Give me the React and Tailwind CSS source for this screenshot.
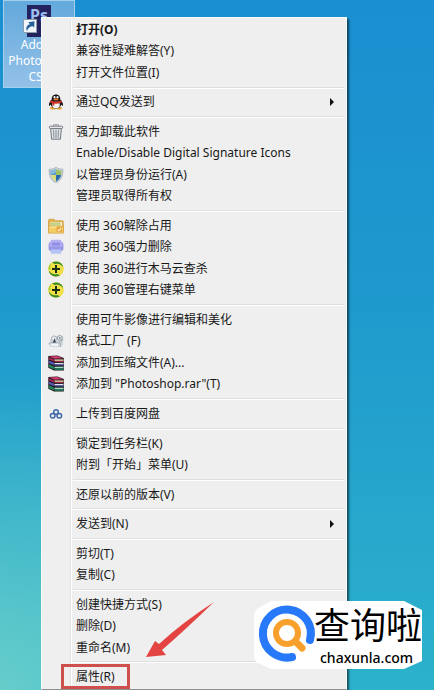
const groups = [
  [
    { label: "打开(O)", bold: true },
    { label: "兼容性疑难解答(Y)" },
    { label: "打开文件位置(I)" },
  ],
  [{ label: "通过QQ发送到", icon: PenguinIcon, submenu: true }],
  [
    { label: "强力卸载此软件", icon: TrashIcon },
    { label: "Enable/Disable Digital Signature Icons" },
    { label: "以管理员身份运行(A)", icon: ShieldIcon },
    { label: "管理员取得所有权" },
  ],
  [
    { label: "使用 360解除占用", icon: FolderIcon },
    { label: "使用 360强力删除", icon: ShredderIcon },
    { label: "使用 360进行木马云查杀", icon: PlusBallIcon },
    { label: "使用 360管理右键菜单", icon: PlusBallIcon },
  ],
  [
    { label: "使用可牛影像进行编辑和美化" },
    { label: "格式工厂 (F)", icon: FactoryIcon },
    { label: "添加到压缩文件(A)...", icon: BooksIcon },
    { label: '添加到 "Photoshop.rar"(T)', icon: BooksIcon },
  ],
  [{ label: "上传到百度网盘", icon: CloudIcon }],
  [{ label: "锁定到任务栏(K)" }, { label: "附到「开始」菜单(U)" }],
  [{ label: "还原以前的版本(V)" }],
  [{ label: "发送到(N)", submenu: true }],
  [{ label: "剪切(T)" }, { label: "复制(C)" }],
  [
    { label: "创建快捷方式(S)" },
    { label: "删除(D)" },
    { label: "重命名(M)" },
  ],
  [{ label: "属性(R)", marked: true }],
];

function PenguinIcon() {
  return (
    <svg viewBox="0 0 16 16" className="size-4">
      <ellipse cx="4.8" cy="14.3" rx="3" ry="1.4" fill="#e9a53a" />
      <ellipse cx="11.2" cy="14.3" rx="3" ry="1.4" fill="#e9a53a" />
      <path d="M8 0.5C5 0.5 3.6 2.7 3.7 5.6C2 7.4 0.5 9.8 1 11.6C1.4 12.3 2.3 11.4 2.8 10.6C3.2 13.3 5.2 14.6 8 14.6S12.8 13.3 13.2 10.6C13.7 11.4 14.6 12.3 15 11.6C15.5 9.8 14 7.4 12.3 5.6C12.4 2.7 11 0.5 8 0.5Z" fill="#191616" />
      <ellipse cx="8" cy="11" rx="3.8" ry="3.2" fill="#f7f5f2" />
      <ellipse cx="6.5" cy="3.2" rx="1" ry="1.3" fill="#fff" />
      <ellipse cx="9.5" cy="3.2" rx="1" ry="1.3" fill="#fff" />
      <ellipse cx="8" cy="5.4" rx="2.7" ry="0.9" fill="#e6802f" />
      <path d="M2.6 6.3Q8 8.8 13.4 6.3L13.8 8.4Q8 11 2.2 8.4Z" fill="#cf332b" />
      <path d="M4.6 8.4L6.5 9L6.2 11.6H4.5Z" fill="#cf332b" />
    </svg>
  );
}

function TrashIcon() {
  return (
    <svg viewBox="0 0 16 16" className="size-4" fill="none" stroke="#8c9299">
      <path d="M2.6 4.2L3.6 15.2H12.4L13.4 4.2Z" fill="#dfe3e7" stroke="#71777e" />
      <path d="M5.4 5.5L5.9 14M8 5.5V14M10.6 5.5L10.1 14" stroke="#969ca3" strokeWidth="1.2" />
      <rect x="1.3" y="2.2" width="13.4" height="2.2" rx="1" fill="#f6f7f8" stroke="#71777e" />
      <path d="M5.6 2V0.8H10.4V2" />
    </svg>
  );
}

function ShieldIcon() {
  return (
    <svg viewBox="0 0 16 16" className="size-4">
      <path d="M8 0.2C6 1.7 3.8 2.2 1.1 2.2C0.7 8.6 2.7 13.4 8 15.8C13.3 13.4 15.3 8.6 14.9 2.2C12.2 2.2 10 1.7 8 0.2Z" fill="#c9d3da" stroke="#8fa0ad" strokeWidth="0.6" />
      <path d="M8 1.9C6.4 2.9 4.7 3.4 2.5 3.5C2.4 5.2 2.5 6.6 2.8 8H8Z" fill="#5a9dcb" />
      <path d="M8 1.9C9.6 2.9 11.3 3.4 13.5 3.5C13.6 5.2 13.5 6.6 13.2 8H8Z" fill="#9fc062" />
      <path d="M2.8 8H8V14.4C5.4 13 3.5 10.9 2.8 8Z" fill="#d9dc78" />
      <path d="M13.2 8H8V14.4C10.6 13 12.5 10.9 13.2 8Z" fill="#2a6aac" />
      <path d="M3.2 4.2Q5.8 4 8 2.6V5Q6 7 2.9 7Z" fill="#a9cfe8" opacity="0.6" />
    </svg>
  );
}

function FolderIcon() {
  return (
    <svg viewBox="0 0 16 16" className="size-4">
      <path d="M0.5 14.5V2.2Q0.5 1.2 1.5 1.2H6L7.4 2.7H14.4Q15.3 2.7 15.3 3.6V14.5Z" fill="#e7b347" stroke="#c18f35" strokeWidth="0.6" />
      <path d="M2.3 4.1H14V8H2.3Z" fill="#f6f3cf" />
      <path d="M2.3 5.2H12.5M2.3 6.9H12.5" stroke="#9ab85a" strokeWidth="0.9" />
      <path d="M0.5 8H15.5V15.2H0.5Z" fill="#f3cc63" stroke="#d19a3b" strokeWidth="0.6" />
      <path d="M1.5 9.2H9" stroke="#fff0a8" />
      <rect x="8.5" y="8.8" width="5.6" height="5.2" rx="1" fill="#e9a23f" />
      <path d="M9.8 11.6L11 12.8L13.2 9.8" fill="none" stroke="#fff4cf" strokeWidth="1.1" />
    </svg>
  );
}

function ShredderIcon() {
  return (
    <svg viewBox="0 0 16 16" className="size-4">
      <rect x="2.8" y="0.8" width="10.4" height="5" rx="1.2" fill="#b3b1f2" />
      <rect x="0.6" y="3" width="14.8" height="9" rx="2" fill="#9a97e8" />
      <rect x="1.4" y="3.6" width="13.2" height="4" rx="1.4" fill="#b1aef3" />
      <rect x="4" y="4" width="8" height="2.6" rx="0.6" fill="#908de3" />
      <path d="M2.6 10.6H13.4L13.2 14.8H2.8Z" fill="#b7c3f6" />
    </svg>
  );
}

function PlusBallIcon() {
  return (
    <svg viewBox="0 0 16 16" className="size-4">
      <circle cx="8" cy="8" r="7.8" fill="#f0e045" />
      <path d="M4 1.4Q11-1.4 14.6 4.2L15.2 6.4Q12.4 1.8 6.6 3Z" fill="#3a8c2b" />
      <path d="M12 14.6Q5 17.4 1.4 11.8L0.8 9.6Q3.6 14.2 9.4 13Z" fill="#3a8c2b" />
      <path d="M0.3 7.2Q0.8 3.6 3.4 1.8Q2 5 2.4 8.4Q0.8 9.6 0.3 7.2Z" fill="#a7cf3a" />
      <path d="M8 4V12M4 8H12" stroke="#17300f" strokeWidth="2" />
    </svg>
  );
}

function FactoryIcon() {
  return (
    <svg viewBox="0 0 16 16" className="size-4">
      <path d="M0.5 11L3 5L9 3L15.3 3.2L15 11L13 14L2.5 13.8Z" fill="#cfd5da" />
      <path d="M0.5 11L3 9.6L12 9.8L15 6M12 9.8L12.6 14" fill="none" stroke="#99a2aa" strokeWidth="0.7" />
      <circle cx="6" cy="5.4" r="2.5" fill="#edf0f2" stroke="#8a949d" strokeWidth="0.7" />
      <path d="M6 4.6V7.6L4.3 9.4H8Z" fill="#36434e" />
      <circle cx="11.8" cy="4.9" r="2.4" fill="#e9ecef" stroke="#75808a" strokeWidth="0.7" />
      <circle cx="11.8" cy="4.9" r="0.8" fill="#5c6b78" />
      <path d="M3 10.8H10V13L3.4 12.8Z" fill="#f3f5f6" />
    </svg>
  );
}

function BooksIcon() {
  return (
    <svg viewBox="0 0 16 16" className="size-4">
      <path d="M0.3 1L9.5 0.4L15.8 3V15.5H6L0.3 12.8Z" fill="#1b1418" />
      <path d="M0.9 1.6L9.4 1L15.2 3.2L6.2 3.7Z" fill="#cf3a70" />
      <path d="M0.7 2.4L5.9 4.6V6.4L0.7 4.2Z" fill="#b3285a" />
      <path d="M6.5 4.4H15.4V5.9H6.5Z" fill="#e3c69b" />
      <path d="M6.5 6H15.4V6.8H6.5Z" fill="#c32d63" />
      <path d="M0.7 5.4L5.9 7.6V10.2L0.7 7.9Z" fill="#5b57b4" />
      <path d="M6.5 7.9H15.4V9.5H6.5Z" fill="#e2dff0" />
      <path d="M6.5 9.6H15.4V10.6H6.5Z" fill="#4049a8" />
      <path d="M0.7 9.3L5.9 11.5V14.5L0.7 12.1Z" fill="#258362" />
      <path d="M6.5 11.7H15.4V13.3H6.5Z" fill="#a5dcc4" />
      <path d="M6.5 13.4H15.4V14.8H6.5Z" fill="#1c8a60" />
    </svg>
  );
}

function CloudIcon() {
  return (
    <svg viewBox="0 0 16 16" className="size-4" fill="none" stroke="#3f68a8" strokeWidth="1.5">
      <circle cx="8" cy="6" r="2.3" />
      <circle cx="4.7" cy="9.7" r="2.3" />
      <circle cx="11.3" cy="9.7" r="2.3" />
    </svg>
  );
}

function MenuItem({ item }) {
  const Icon = item.icon;
  return (
    <li role="none" className="relative flex min-h-[21px] grow">
      <button type="button" role="menuitem" aria-haspopup={item.submenu ? "menu" : undefined} className="flex w-full items-center text-left hover:bg-[#dce8f5]">
        <span className="flex w-7 shrink-0 justify-center">{Icon && <Icon />}</span>
        <span className={item.bold ? "grow pl-1.5 font-bold" : "grow pl-1.5"}>{item.label}</span>
        {item.submenu && (
          <svg viewBox="0 0 4 8" className="mr-2.5 h-2 w-1">
            <path d="M0 0L4 4L0 8Z" fill="#111" />
          </svg>
        )}
      </button>
      {item.marked && <span className="pointer-events-none absolute -top-0.5 left-[19px] h-[25px] w-[69px] border-[3px] border-[#cf4f4d]" />}
    </li>
  );
}

function ContextMenu() {
  return (
    <ul role="menu" className="relative mr-[87px] ml-[41px] flex grow flex-col border border-[#f9fafa] border-b-[#8a8f92] bg-[#efefef] pt-px pr-0.5 pb-px text-xs leading-4 text-[#181818] shadow-[2px_2px_2px_rgba(0,0,0,0.55)]">
      <li role="none" aria-hidden="true" className="absolute inset-y-0.5 left-[28px] w-0.5 border-r border-l border-r-white border-l-[#e1e2e3]" />
      {groups.map((items, i) => [
        i > 0 && (
          <li key={`line-${i}`} role="separator" className="flex h-2 shrink-0 items-center pl-[31px]">
            <span className="h-0.5 w-full border-y border-t-[#dedede] border-b-white" />
          </li>
        ),
        ...items.map((item) => <MenuItem key={item.label} item={item} />),
      ])}
    </ul>
  );
}

function DesktopShortcut() {
  return (
    <a href="#photoshop" className="absolute top-0 left-[3px] flex h-[88px] w-[72px] flex-col items-center border border-[#a3d0ef] bg-linear-to-b from-[#62a9dc] to-[#93c1e8] pt-1 text-center text-xs leading-4 text-white">
      <span className="relative flex h-8 w-6 justify-center bg-[#22235f] text-base leading-5 font-bold text-[#9ebdf0]">
        Ps
        <svg viewBox="0 0 14 14" className="absolute bottom-1 -left-1 size-3.5">
          <rect x="0.5" y="0.5" width="13" height="13" fill="#f1f6fa" stroke="#8c9dac" />
          <path d="M4 12C2.5 8.5 4 6 7 5.3L5.4 3.3L11.5 2.3L11.2 8.5L9.3 6.9C6.5 7.5 5 9 4 12Z" fill="#235d9c" />
        </svg>
      </span>
      <span>Adobe Photoshop CS6</span>
    </a>
  );
}

function Watermark() {
  return (
    <aside className="absolute right-3 bottom-5 h-[70px] w-[168px]">
      <svg viewBox="0 0 168 70" className="absolute inset-0">
        <path d="M17 1H150L168 10V61L150 69H17L4 63Q0 60 0 55V16Q0 12 3 9Z" fill="#fff" />
        <path d="M38 57A24 24 0 1 1 56 40" fill="none" stroke="#2878fa" strokeWidth="8" strokeLinecap="round" />
        <circle cx="33" cy="33" r="11" fill="none" stroke="#f8a02c" strokeWidth="6" />
        <path d="M42 42L48 48" stroke="#f8a02c" strokeWidth="7" strokeLinecap="round" />
      </svg>
      <div className="relative flex h-full flex-col justify-end pb-1 pl-[60px] text-black">
        <span className="text-4xl leading-[48px] whitespace-nowrap">查询啦</span>
        <span className="pl-1.5 text-sm leading-4 font-medium">chaxunla.com</span>
      </div>
    </aside>
  );
}

export default function App() {
  return (
    <main className="relative flex min-h-screen flex-col overflow-hidden bg-[radial-gradient(circle_at_0%_100%,#66cdca_0%,#66cdca00_38%),linear-gradient(to_bottom,#1b8fd1,#1e98cd_40%,#2cb2cc)] pt-[17px] font-['Noto_Sans','Noto_Sans_CJK_SC',sans-serif]">
      <DesktopShortcut />
      <ContextMenu />
      <svg viewBox="0 0 70 56" className="pointer-events-none absolute bottom-[33px] left-[145px] h-14 w-[70px]">
        <path d="M69 1Q40 29 17 49L21 54L1 56L10 40L14 43Q38 21 69 1Z" fill="#e34441" />
      </svg>
      <Watermark />
    </main>
  );
}
